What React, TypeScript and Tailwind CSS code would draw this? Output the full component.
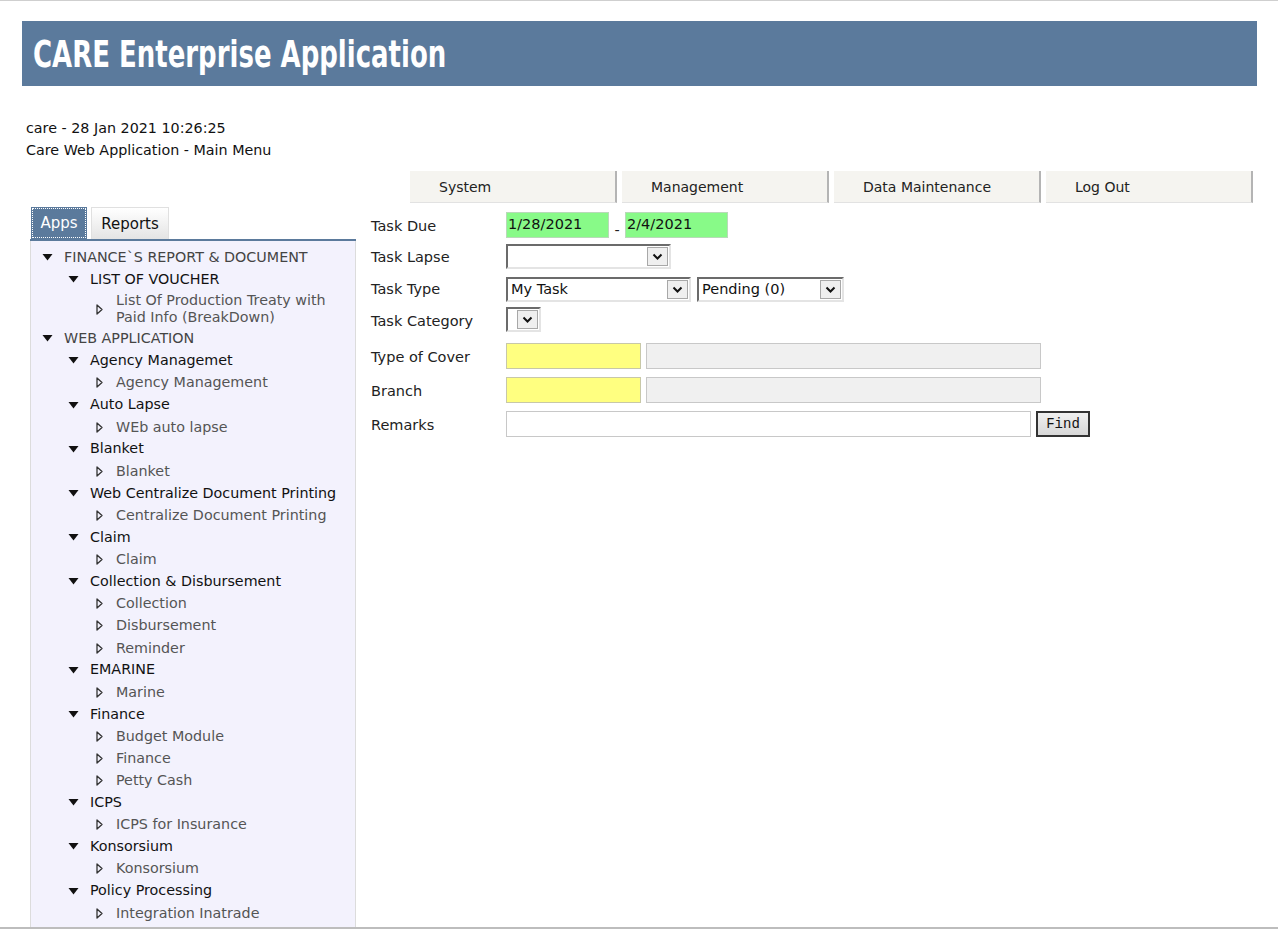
import React from 'react';

type Group = { label: string; items: string[] };
type Root = { label: string; groups: Group[] };

const tree: Root[] = [
  {
    label: 'FINANCE`S REPORT & DOCUMENT',
    groups: [{ label: 'LIST OF VOUCHER', items: ['List Of Production Treaty with Paid Info (BreakDown)'] }],
  },
  {
    label: 'WEB APPLICATION',
    groups: [
      { label: 'Agency Managemet', items: ['Agency Management'] },
      { label: 'Auto Lapse', items: ['WEb auto lapse'] },
      { label: 'Blanket', items: ['Blanket'] },
      { label: 'Web Centralize Document Printing', items: ['Centralize Document Printing'] },
      { label: 'Claim', items: ['Claim'] },
      { label: 'Collection & Disbursement', items: ['Collection', 'Disbursement', 'Reminder'] },
      { label: 'EMARINE', items: ['Marine'] },
      { label: 'Finance', items: ['Budget Module', 'Finance', 'Petty Cash'] },
      { label: 'ICPS', items: ['ICPS for Insurance'] },
      { label: 'Konsorsium', items: ['Konsorsium'] },
      { label: 'Policy Processing', items: ['Integration Inatrade'] },
    ],
  },
];

const font = { fontFamily: '"DejaVu Sans", Verdana, sans-serif' };

function DownArrow() {
  return (
    <svg width="11" height="8" viewBox="0 0 11 8" className="shrink-0">
      <path d="M0.5 1 L10.5 1 L5.5 7.5 Z" fill="#111" />
    </svg>
  );
}

function LeafArrow() {
  return (
    <svg width="7" height="11" viewBox="0 0 7 11" className="shrink-0">
      <path d="M1 1 L6 5.5 L1 10 Z" fill="none" stroke="#333" strokeWidth="1.3" strokeLinejoin="round" />
    </svg>
  );
}

function TreeLeaf({ label }: { label: string }) {
  return (
    <div className="flex items-center pl-[65px] min-h-[22.1px] pt-[2px] pb-[1px]">
      <LeafArrow />
      <span className="ml-[13px] w-[222px] text-[#555] leading-[17px]">{label}</span>
    </div>
  );
}

function Chevron() {
  return (
    <span className="flex items-center justify-center w-[21px] h-[19px] bg-[#efefef] border border-[#a8a8a8] shrink-0">
      <svg width="11" height="7" viewBox="0 0 11 7">
        <path d="M1.5 1.5 L5.5 5.5 L9.5 1.5" fill="none" stroke="#111" strokeWidth="2" />
      </svg>
    </span>
  );
}

function SelectBox({ width, value }: { width: string; value?: string }) {
  return (
    <div
      className={`${width} h-[25px] flex items-center justify-between border-2 border-t-[#6b6b6b] border-l-[#6b6b6b] border-r-[#e4e4e4] border-b-[#e4e4e4] bg-white pl-[3px] pr-[1px]`}
    >
      <span className="text-[#111] truncate pt-[1px]">{value}</span>
      <Chevron />
    </div>
  );
}

function MenuButton({ label }: { label: string }) {
  return (
    <div className="w-[207px] shrink-0 h-[32px] flex items-center pl-[29px] pt-[2px] bg-[#f5f4f0] border-r-2 border-r-[#b4b4b4] border-b border-b-[#e2e2e2] text-[#222] text-[14px]">
      {label}
    </div>
  );
}

export default function App() {
  return (
    <div className="w-[1278px] h-[929px] bg-white flex flex-col text-[14.3px] text-[#111]" style={font}>
      <div className="h-px bg-[#cfcfcf] shrink-0" />
      <div className="flex-1 overflow-hidden pt-[20px] pl-[22px] pr-[21px]">
        <div className="h-[65px] bg-[#5b7a9c] flex items-center pl-[11px] overflow-hidden">
          <h1
            className="text-white font-bold text-[38px] leading-none whitespace-nowrap origin-left scale-x-[0.76]"
            style={{ fontFamily: '"Liberation Sans Narrow", "DejaVu Sans Condensed", "DejaVu Sans", sans-serif' }}
          >
            CARE Enterprise Application
          </h1>
        </div>

        <div className="mt-[31px] pl-[4px] leading-[22px] text-[#111]">
          <div>care - 28 Jan 2021 10:26:25</div>
          <div>Care Web Application - Main Menu</div>
        </div>

        <div className="mt-[10px] ml-[388px] flex gap-[5px]">
          <MenuButton label="System" />
          <MenuButton label="Management" />
          <MenuButton label="Data Maintenance" />
          <MenuButton label="Log Out" />
        </div>

        <div className="mt-[4px] flex">
          <div className="ml-[8px] w-[326px] shrink-0">
            <div className="flex items-end h-[32px] gap-[4px] pl-[1px]">
              <div className="h-[32px] w-[56px] bg-[#5b7a9c] text-white flex items-center justify-center pt-[1px] text-[15px] outline-1 outline-dotted outline-white -outline-offset-2">
                Apps
              </div>
              <div className="h-[32px] w-[78px] bg-gradient-to-b from-white to-[#e4e4e4] border border-[#e0e0e0] border-b-0 text-[#111] flex items-center justify-center pt-[1px] text-[15px]">
                Reports
              </div>
            </div>
            <div className="h-[2px] bg-[#5b7a9c]" />
            <div className="min-h-[720px] bg-[#f3f2fd] border-x border-[#dcdcdc] pt-[5px] pb-[4px]">
              {tree.map((root) => (
                <div key={root.label}>
                  <div className="flex items-center h-[22.1px] pl-[11px]">
                    <DownArrow />
                    <span className="ml-[11px] text-[#444] pt-[1px]">{root.label}</span>
                  </div>
                  {root.groups.map((g) => (
                    <div key={g.label}>
                      <div className="flex items-center h-[22.1px] pl-[37px]">
                        <DownArrow />
                        <span className="ml-[11px] text-[#111] pt-[1px]">{g.label}</span>
                      </div>
                      {g.items.map((it) => (
                        <TreeLeaf key={it} label={it} />
                      ))}
                    </div>
                  ))}
                </div>
              ))}
            </div>
          </div>

          <div className="ml-[15px] pt-[5px] text-[14.5px] text-[#222]">
            <div className="flex items-center h-[26px]">
              <span className="w-[135px] pt-[3px]">Task Due</span>
              <div className="w-[103px] h-[26px] bg-[#88fa88] border border-[#b9d9b9] flex items-center pl-[1px] text-[#111]">1/28/2021</div>
              <span className="w-[16px] text-center self-end pb-[1px] leading-[14px]">-</span>
              <div className="w-[103px] h-[26px] bg-[#88fa88] border border-[#b9d9b9] flex items-center pl-[1px] text-[#111]">2/4/2021</div>
            </div>

            <div className="flex items-center h-[25px] mt-[6px]">
              <span className="w-[135px] pt-[2px]">Task Lapse</span>
              <SelectBox width="w-[165px]" />
            </div>

            <div className="flex items-center h-[25px] mt-[8px]">
              <span className="w-[135px]">Task Type</span>
              <SelectBox width="w-[185px]" value="My Task" />
              <div className="ml-[6px]">
                <SelectBox width="w-[147px]" value="Pending (0)" />
              </div>
            </div>

            <div className="flex items-center h-[25px] mt-[5px]">
              <span className="w-[135px] pt-[4px]">Task Category</span>
              <SelectBox width="w-[35px]" />
            </div>

            <div className="flex items-center h-[26px] mt-[11px]">
              <span className="w-[135px] pt-[3px]">Type of Cover</span>
              <div className="w-[135px] h-[26px] bg-[#ffff80] border border-[#c8c8a8]" />
              <div className="ml-[5px] w-[395px] h-[26px] bg-[#f0f0f0] border border-[#c8c8c8]" />
            </div>

            <div className="flex items-center h-[26px] mt-[8px]">
              <span className="w-[135px] pt-[3px]">Branch</span>
              <div className="w-[135px] h-[26px] bg-[#ffff80] border border-[#c8c8a8]" />
              <div className="ml-[5px] w-[395px] h-[26px] bg-[#f0f0f0] border border-[#c8c8c8]" />
            </div>

            <div className="flex items-center h-[26px] mt-[8px]">
              <span className="w-[135px] pt-[3px]">Remarks</span>
              <div className="w-[525px] h-[26px] bg-white border border-[#c8c8c8]" />
              <button
                type="button"
                className="ml-[5px] w-[54px] h-[26px] bg-gradient-to-b from-[#f0f0f0] to-[#d8d8d8] border-2 border-[#333] text-[14px] text-[#111] leading-none"
                style={{ fontFamily: '"Liberation Mono", "Courier New", monospace' }}
              >
                Find
              </button>
            </div>
          </div>
        </div>
      </div>
      <div className="h-[2px] bg-[#bdbdbd] shrink-0" />
    </div>
  );
}
